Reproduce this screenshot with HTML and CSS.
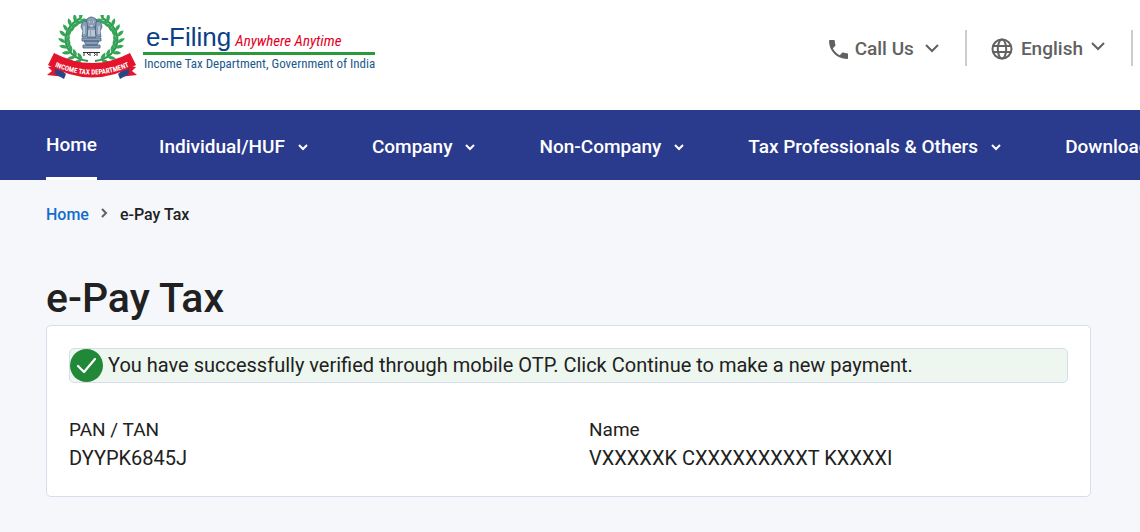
FILE: index.html
```html
<!DOCTYPE html>
<html lang="en">
<head>
<meta charset="utf-8">
<title>e-Pay Tax</title>
<link rel="stylesheet" href="styles.css">
</head>
<body>
<header class="topbar">
  <a class="brand" href="#">
    <svg class="emblem" viewBox="0 0 92 64" aria-hidden="true">
      <defs>
        <path id="ribbon-line" d="M3 49Q46 70 89 49"/>
        <g id="leaf"><path d="M0 0q-6-1-7-6q6 0 7 6zM0 0q5-1 5-7q-5 1-5 7z"/></g>
        <g id="branch">
          <path d="M42 46C15 42 12 14 35 3" fill="none" stroke="#2b9a4c" stroke-width="2"/>
          <g fill="#35a558">
            <use href="#leaf" transform="translate(36 45) rotate(-65)"/>
            <use href="#leaf" transform="translate(30 42) rotate(-52)"/>
            <use href="#leaf" transform="translate(25 38) rotate(-40)"/>
            <use href="#leaf" transform="translate(22 33) rotate(-26)"/>
            <use href="#leaf" transform="translate(20 28) rotate(-10)"/>
            <use href="#leaf" transform="translate(20 22) rotate(4)"/>
            <use href="#leaf" transform="translate(22 17) rotate(18)"/>
            <use href="#leaf" transform="translate(25 12) rotate(32)"/>
            <use href="#leaf" transform="translate(29 8) rotate(46)"/>
            <use href="#leaf" transform="translate(34 5) rotate(58)"/>
          </g>
        </g>
      </defs>
      <use href="#branch"/>
      <use href="#branch" transform="translate(91 0) scale(-1 1)"/>
      <g fill="#8ba0b8" stroke="#48617f" stroke-width=".8">
        <path d="M41 4q4-4 9 0l1 5-2 6H42l-2-6z"/>
        <path d="M36 8q2-3 5-1l1 10-2 5h-4l1-6-2-4zM55 8q-2-3-5-1l-1 10 2 5h4l-1-6 2-4z"/>
        <path d="M42 12h7l1 11h-9z"/>
        <path d="M36 23h19v3H36zM38 26h15l-2 4H40zM37 30h17v3H37z"/>
      </g>
      <path d="M43 7h1M47 7h1M44 11h3M43 15v6M46 15v6M48 15v6M38 11v8M53 11v8" stroke="#e6edf4" fill="none"/>
      <path d="M37 37.500h17M38 38v3M41 38l2 2M44 37v4M48 38q3 1 0 3M51 37v4" stroke="#333" fill="none"/>
      <path d="M14 50L2 52l4 4-5 4 18 2zM78 50l12 2-4 4 5 4-18 2z" fill="#e3142b"/>
      <path d="M9 50l11 9-2 5-9-5zM83 50l-11 9 2 5 9-5z" fill="#244889"/>
      <path d="M8 38Q46 58 84 38L90 50Q46 75 2 50Z" fill="#e3142b"/>
      <text class="ribbon-text"><textPath href="#ribbon-line" startOffset="50%">INCOME TAX DEPARTMENT</textPath></text>
    </svg>
    <span class="wordmark">
      <span class="wordmark-top"><span class="product">e-Filing</span><em class="motto">Anywhere Anytime</em></span>
      <span class="department">Income Tax Department, Government of India</span>
    </span>
  </a>
  <div class="tools">
    <button class="tool" type="button">
      <svg class="icon-phone" viewBox="3 3 18 18" aria-hidden="true"><path fill="currentColor" d="M6.620 10.790c1.440 2.830 3.760 5.140 6.590 6.590l2.200-2.200c.27-.27.67-.36 1.020-.24 1.120.37 2.330.57 3.570.57.550 0 1 .45 1 1V20c0 .55-.45 1-1 1C10.610 21 3 13.390 3 4c0-.55.450-1 1-1h3.500c.55 0 1 .45 1 1 0 1.250.2 2.450.57 3.570.11.350.03.740-.25 1.020z"/></svg>
      <span>Call Us</span>
      <svg class="chevron" viewBox="0 0 14 14" aria-hidden="true"><path d="M1 3l6 6 6-6"/></svg>
    </button>
    <span class="divider"></span>
    <button class="tool language" type="button">
      <svg class="icon-globe" viewBox="0 0 22 22" aria-hidden="true"><g fill="none" stroke="currentColor" stroke-width="2"><circle cx="11" cy="11" r="9.500"/><ellipse cx="11" cy="11" rx="4.200" ry="9.500"/><path d="M2 8h18M2 14h18"/></g></svg>
      <span>English</span>
      <svg class="chevron" viewBox="0 0 14 14" aria-hidden="true"><path d="M1 3l6 6 6-6"/></svg>
    </button>
    <span class="divider"></span>
  </div>
</header>
<nav class="mainnav">
  <a class="navitem current" href="#">Home</a>
  <a class="navitem" href="#">Individual/HUF<svg class="caret" viewBox="0 -1 12 12" aria-hidden="true"><path d="M1 3l4 4 4-4"/></svg></a>
  <a class="navitem" href="#">Company<svg class="caret" viewBox="0 -1 12 12" aria-hidden="true"><path d="M1 3l4 4 4-4"/></svg></a>
  <a class="navitem" href="#">Non-Company<svg class="caret" viewBox="0 -1 12 12" aria-hidden="true"><path d="M1 3l4 4 4-4"/></svg></a>
  <a class="navitem" href="#">Tax Professionals &amp; Others<svg class="caret" viewBox="0 -1 12 12" aria-hidden="true"><path d="M1 3l4 4 4-4"/></svg></a>
  <a class="navitem" href="#">Downloads</a>
</nav>
<main class="page">
  <nav class="crumbs" aria-label="Breadcrumb">
    <a href="#">Home</a>
    <svg class="crumb-sep" viewBox="0 0 7 14" aria-hidden="true"><path d="M1 1l4 4-4 4"/></svg>
    <span>e-Pay Tax</span>
  </nav>
  <h1 class="title">e-Pay Tax</h1>
  <section class="card">
    <div class="notice" role="status">
      <svg class="tick" viewBox="0 0 33 33" aria-hidden="true"><circle cx="16.500" cy="16.500" r="16.500" fill="#218838"/><path d="M8 17l6 6L25 10" fill="none" stroke="#fff" stroke-width="2.200" stroke-linecap="round" stroke-linejoin="round"/></svg>
      <span class="notice-text">You have successfully verified through mobile OTP. Click Continue to make a new payment.</span>
    </div>
    <dl class="details">
      <div><dt>PAN / TAN</dt><dd>DYYPK6845J</dd></div>
      <div><dt>Name</dt><dd>VXXXXXK CXXXXXXXXXT KXXXXI</dd></div>
    </dl>
  </section>
</main>
</body>
</html>
```
FILE: styles.css
```css
* { box-sizing: border-box; }
body {
  margin: 0;
  min-height: 100vh;
  overflow-x: hidden;
  background: #f5f7fb;
  color: #212121;
  font-family: Roboto, "Liberation Sans", sans-serif;
}
a { color: inherit; text-decoration: none; }
.topbar {
  display: flex;
  justify-content: space-between;
  align-items: flex-start;
  height: 110px;
  padding: 15px 7px 0 46px;
  background: #fff;
}
.brand { display: flex; gap: 5px; }
.emblem { width: 92px; height: 64px; }
.ribbon-text {
  fill: #fff;
  font: bold 7px "Roboto Condensed", Roboto, sans-serif;
  text-anchor: middle;
}
.wordmark {
  display: flex;
  flex-direction: column;
  padding-top: 6px;
  font-family: "Liberation Sans", Arial, sans-serif;
}
.wordmark-top {
  display: flex;
  align-items: baseline;
  gap: 4px;
  height: 34px;
  padding-left: 3px;
  border-bottom: 3px solid #29993c;
  line-height: 32px;
}
.product { color: #0b3f88; font-size: 26px; }
.motto { color: #e3001f; font: italic 15px/20px "Roboto Condensed", Roboto, sans-serif; }
.department {
  padding-left: 1px;
  color: #1c5a8c;
  font: 13px/18px "Roboto Condensed", Roboto, sans-serif;
  white-space: nowrap;
}
.tools { display: flex; align-items: center; padding-top: 15px; }
.tool {
  display: flex;
  align-items: center;
  gap: 7px;
  padding: 2px 0 0;
  border: 0;
  background: none;
  color: #616161;
  font: 500 19px/24px Roboto, sans-serif;
}
.language { gap: 8px; }
.icon-phone { width: 19px; height: 19px; }
.icon-globe { width: 22px; height: 22px; }
.chevron { width: 14px; height: 14px; margin-left: 4px; }
.language .chevron { margin-left: 0; margin-bottom: 4px; }
.chevron path, .caret path, .crumb-sep path { fill: none; stroke: currentColor; stroke-width: 2; }
.divider { width: 2px; height: 36px; margin: 0 24px 0 26px; background: #ccc; }
.divider:last-child { margin-right: 0; }
.mainnav {
  display: flex;
  gap: 62px;
  height: 70px;
  padding-left: 46px;
  overflow: hidden;
  background: #2a3a8d;
  color: #fff;
}
.navitem {
  display: flex;
  flex: none;
  align-items: center;
  gap: 13px;
  padding-top: 3px;
  font-size: 19px;
  font-weight: 500;
}
.current { padding-top: 2px; border-bottom: 3px solid #fff; }
.caret { width: 12px; height: 12px; }
.page { padding: 25px 49px 36px 46px; }
.crumbs {
  display: flex;
  align-items: center;
  gap: 12px;
  font-size: 16px;
  font-weight: 500;
  line-height: 20px;
}
.crumbs a { color: #136cce; }
.crumb-sep { width: 7px; height: 14px; color: #616161; }
.title { margin: 47px 0 1px; font-size: 41px; font-weight: 500; line-height: 52px; }
.card {
  padding: 22px;
  border: 1px solid #d9dcec;
  border-radius: 5px;
  background: #fff;
}
.notice {
  display: flex;
  align-items: center;
  gap: 5px;
  border: 1px solid #d9dcec;
  border-radius: 5px;
  background: #edf6ef;
  font-size: 20px;
  line-height: 30px;
}
.notice-text { padding-bottom: 2px; }
.tick { flex: none; width: 33px; height: 33px; }
.details {
  display: grid;
  grid-template-columns: 520px 1fr;
  margin: 32px 0 1px;
  font-size: 19px;
  line-height: 29px;
}
.details dd { margin: 0; font-size: 20px; }
```
